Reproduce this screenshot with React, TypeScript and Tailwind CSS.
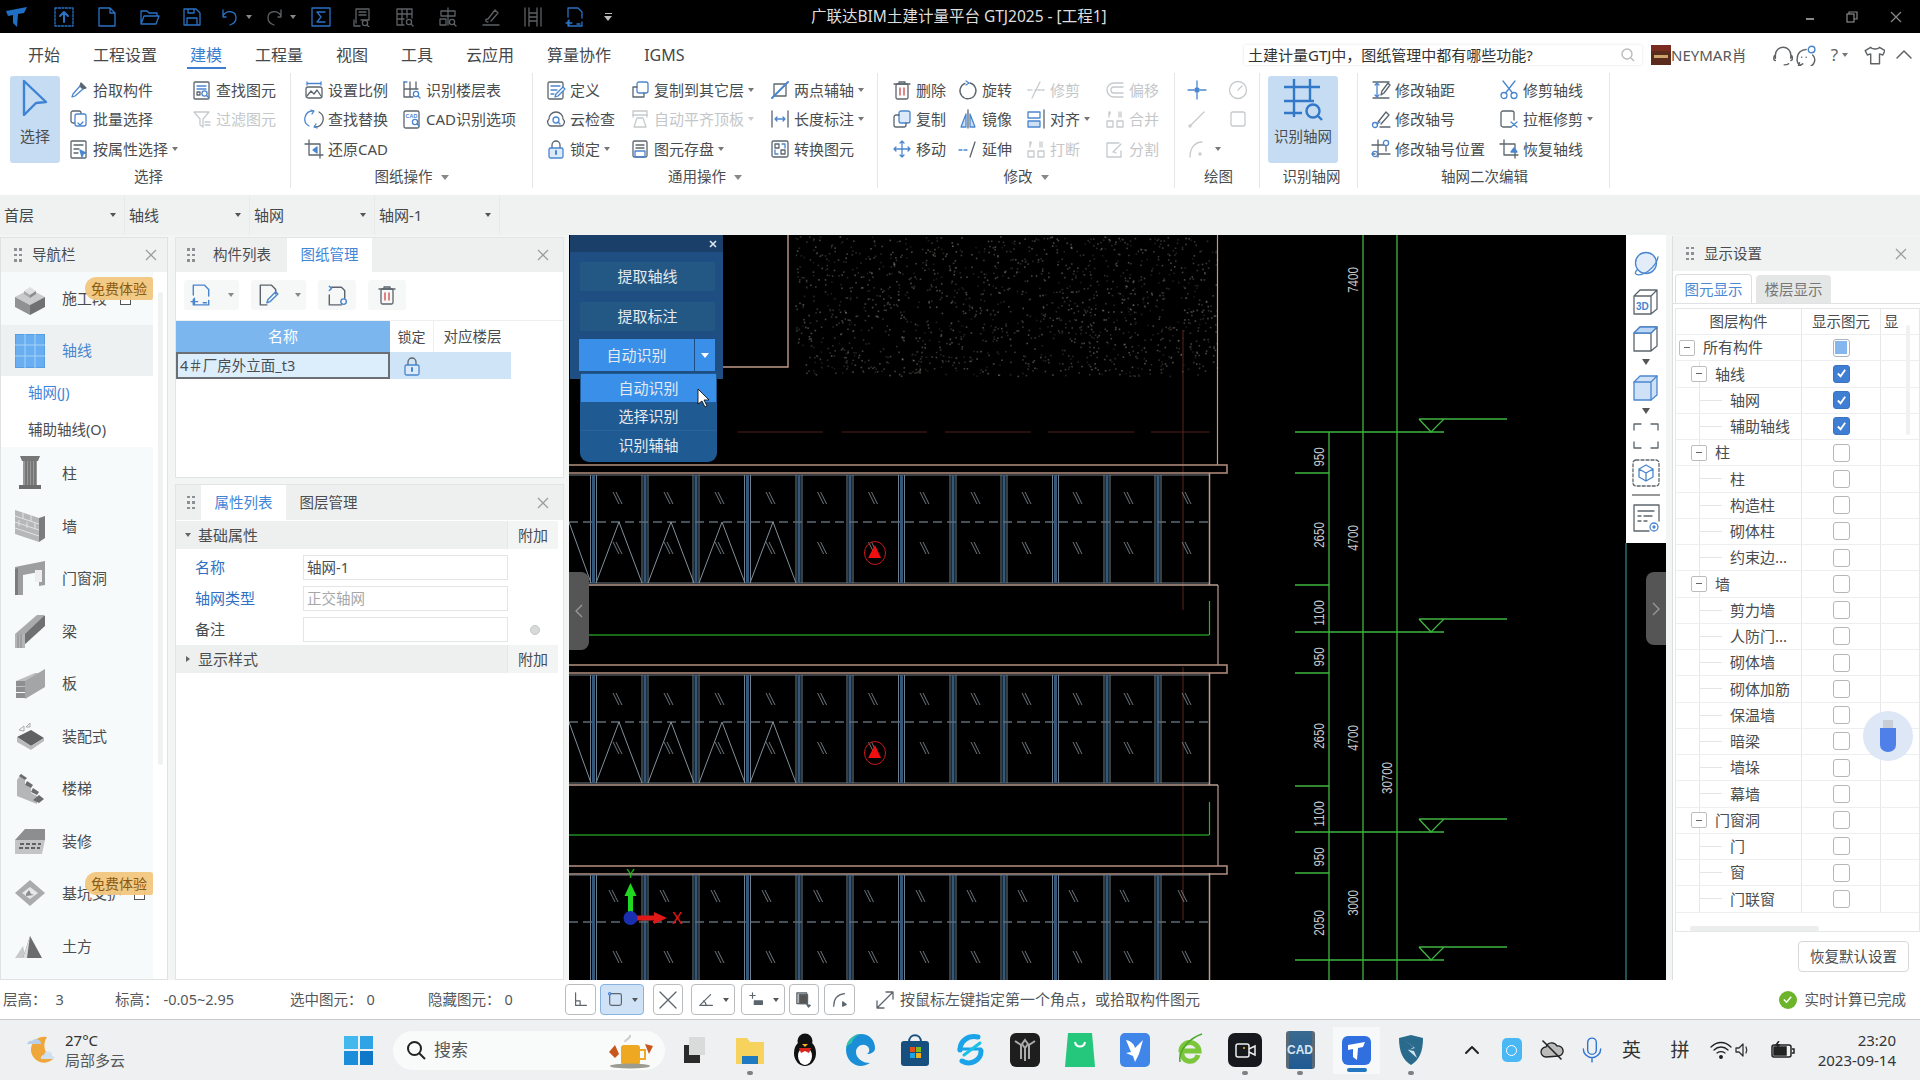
import React from "react";

const B = "#4a86cf";
const G = "#5c656d";
const L = "#c6cacd";

const Sv = ({ s = 20, c = B, w = 1.3, vb = 20, children }: any) => (
  <svg width={s} height={s} viewBox={`0 0 ${vb} ${vb}`} fill="none" stroke={c} strokeWidth={w} strokeLinecap="round" strokeLinejoin="round" className="shrink-0">
    {children}
  </svg>
);
const Q = ({ x = 13, y = 13, c = B }: any) => (
  <g stroke={c}><circle cx={x} cy={y} r="2.6" /><path d={`M${x + 2} ${y + 2}l2 2`} /></g>
);

const ic: Record<string, React.ReactNode> = {
  pick: <Sv c={G}><path d="M12 3l5 5-3 1-3-3z" fill={G} /><path d="M11 6l-7 8-1 3 3-1 8-7" stroke={B} /></Sv>,
  batch: <Sv><rect x="2" y="2" width="10" height="12" rx="2" stroke={G} /><rect x="6" y="5" width="11" height="12" rx="2" fill="#fff" /><path d="M9 14l2 2 3-3" stroke={B} /></Sv>,
  attr: <Sv c={G}><rect x="2" y="2" width="15" height="17" rx="1" /><path d="M5 6h9M5 10h5M5 14h4" /><path d="M11 11l6 3-3 1-1 3z" fill={B} stroke={B} /></Sv>,
  find: <Sv c={G}><rect x="2" y="2" width="15" height="17" rx="1" /><path d="M5 6h9M5 9h9" stroke={B} /><rect x="5" y="12" width="3" height="3" /><Q x={12.5} y={13.5} c={B} /></Sv>,
  filter: <Sv c={L}><path d="M2 3h15l-6 7v8l-3-2v-6z" /><path d="M13 13h5M13 16h5" /></Sv>,
  scale: <Sv c={G}><path d="M3 2v3M17 2v3M3 3.5h14" stroke={B} /><rect x="2" y="7" width="16" height="11" rx="2" /><path d="M3 16l4-5 3 3 3-4 4 6" /></Sv>,
  floor: <Sv c={G}><path d="M2 2v7h14M2 9v8h9M8 2v15M14 2v7" /><path d="M2 2h3" stroke={B} /><Q x={14} y={14} /></Sv>,
  findrep: <Sv c={G}><path d="M9 2A8 8 0 0 0 5 17" stroke={B} /><path d="M11 18a8 8 0 0 0 4-15" /><path d="M7 1l3 1-2 3M13 19l-3-1 2-3" stroke={B} /></Sv>,
  cad: <Sv c={G}><rect x="2" y="2" width="15" height="17" rx="1.5" /><text x="3.5" y="9" fontSize="5.5" stroke="none" fill={B} fontFamily="Liberation Sans" fontWeight="700">CAD</text><Q x={13} y={13} /></Sv>,
  crop: <Sv c={G}><path d="M5 1v15h14M1 5h15v14" /><path d="M13 8l-4 3 4 3z" fill={B} stroke={B} /></Sv>,
  define: <Sv c={G}><rect x="2" y="2" width="15" height="17" rx="1.5" /><path d="M5 6h9M5 10h6M5 14h3" stroke={B} /><path d="M9 17l1-3 7-7 2 2-7 7z" fill="#fff" stroke={B} /></Sv>,
  cloud: <Sv c={G}><path d="M5 17a4 4 0 0 1-2-7 7 7 0 0 1 14 0 4 4 0 0 1-2 7z" /><circle cx="10" cy="11" r="3" stroke={B} /><path d="M12 13l2 2" stroke={B} /></Sv>,
  lock: <Sv c={G}><path d="M6 9V6a4 4 0 0 1 8 0v3" /><rect x="3" y="9" width="14" height="10" rx="1.5" fill="#dbe9f8" stroke={B} /><path d="M10 12v3" stroke={B} strokeWidth="2" /></Sv>,
  copyfl: <Sv c={B}><rect x="7" y="2" width="11" height="11" rx="2" /><path d="M7 7H3v10h11v-4" stroke={G} /></Sv>,
  auto: <Sv c={L}><rect x="3" y="2" width="14" height="4" /><path d="M7 9l-3 9h12l-3-9zM3 6v2M17 6v2" /></Sv>,
  save: <Sv c={G}><rect x="3" y="2" width="14" height="16" rx="1.5" /><path d="M6 6h8M6 9h8" /><rect x="5" y="12" width="10" height="6" stroke={B} /></Sv>,
  twop: <Sv c={G}><rect x="4" y="4" width="12" height="12" /><path d="M2 18L18 2" stroke={B} strokeWidth="2" /></Sv>,
  len: <Sv c={G}><path d="M2 2v16M18 2v16" /><path d="M5 10h10M5 10l2-2M5 10l2 2M15 10l-2-2M15 10l-2 2" stroke={B} /></Sv>,
  conv: <Sv c={G}><rect x="2" y="2" width="16" height="16" rx="1.5" /><path d="M5 5h4v4H5zM11 11h4v4h-4z" /><path d="M15 9V5h-3M5 11v4h3" stroke={B} /></Sv>,
  del: <Sv c={G}><path d="M7 4V2h6v2M2 4h16" /><rect x="4" y="4" width="12" height="15" rx="1.5" /><path d="M8 8v7M12 8v7" stroke="#d04545" /></Sv>,
  rotate: <Sv c={G}><path d="M12 3a8 8 0 1 1-5 .3" /><path d="M8 1l3 2-3 2" stroke={B} /></Sv>,
  trim: <Sv c={L}><path d="M6 18L14 2" /><path d="M2 10h4M9 10h9" strokeDasharray="2 1.5" /></Sv>,
  offset: <Sv c={L}><path d="M18 3H9a7 7 0 0 0 0 14h9M18 7H9a3 3 0 0 0 0 6h9" /></Sv>,
  copy: <Sv c={B}><rect x="7" y="2" width="11" height="12" rx="2" fill="#dbe9f8" /><path d="M7 6H4a2 2 0 0 0-2 2v8a2 2 0 0 0 2 2h8a2 2 0 0 0 2-2v-2" stroke={G} /></Sv>,
  mirror: <Sv c={G}><path d="M10 1v18" /><path d="M8 5L3 18h5z" stroke={B} fill="#cfe0f5" /><path d="M12 5l5 13h-5z" stroke={B} fill="#cfe0f5" /></Sv>,
  align: <Sv c={B}><rect x="2" y="3" width="12" height="6" /><rect x="2" y="12" width="12" height="6" fill="#cfe0f5" /><path d="M18 1v18" stroke={G} /></Sv>,
  merge: <Sv c={L}><rect x="2" y="12" width="6" height="6" /><rect x="12" y="12" width="6" height="6" /><path d="M4 3v5M5 3v2M14 3v5M16 3v5" /></Sv>,
  move: <Sv c={B}><path d="M10 2v16M2 10h16M10 2L8 4M10 2l2 2M10 18l-2-2M10 18l2-2M2 10l2-2M2 10l2 2M18 10l-2-2M18 10l-2 2" /></Sv>,
  extend: <Sv c={G}><path d="M1 11h3M6 11h3" stroke={B} /><path d="M12 18l5-15" /></Sv>,
  split: <Sv c={L}><path d="M14 4H2v14h14v-6" /><path d="M8 13l8-8M11 14l-2-1" /></Sv>,
  dot: <Sv c={B}><path d="M10 1v6M10 13v6M1 10h6M13 10h6" /><circle cx="10" cy="10" r="2" fill={B} /></Sv>,
  gauge: <Sv c={L}><circle cx="10" cy="10" r="8.5" /><path d="M10 10l4-4" /></Sv>,
  line: <Sv c={L}><path d="M3 17L17 3" /><circle cx="3" cy="17" r="1" /></Sv>,
  sq: <Sv c={L}><rect x="3" y="3" width="14" height="14" rx="2" /></Sv>,
  arc: <Sv c={L}><path d="M3 18C3 9 8 3 15 3" /><circle cx="13" cy="15" r="1" fill={L} /></Sv>,
  modd: <Sv c={G}><path d="M2 2h16M2 18h16" /><path d="M6 3v14M6 3L4 5M6 3l2 2M6 17l-2-2M6 17l2-2" stroke={B} /><path d="M10 15l1-4 6-8 2 2-6 8z" /></Sv>,
  modn: <Sv c={G}><path d="M7 13L15 3l3 3-8 9" /><path d="M9 18h10" /><circle cx="4" cy="16" r="2.5" stroke={B} /><path d="M6 15l3-2" stroke={B} /></Sv>,
  modp: <Sv c={G}><path d="M1 6h12M7 1v17M1 15h3M8 15h11" /><circle cx="15" cy="4" r="2.6" stroke={B} /><path d="M15 7v5" /><circle cx="4" cy="15" r="2.6" stroke={B} /></Sv>,
  sciss: <Sv c={B}><circle cx="5" cy="15.5" r="3" /><circle cx="15" cy="15.5" r="3" /><path d="M6.5 13L16 1M13.5 13L4 1" /></Sv>,
  boxx: <Sv c={G}><path d="M12 18H4a2 2 0 0 1-2-2V4a2 2 0 0 1 2-2h9a2 2 0 0 1 2 2v7" /><path d="M12 13l6 5M18 13l-6 5" stroke={B} /></Sv>,
  rest: <Sv c={G}><path d="M5 1v15h14M1 5h15v14" /><path d="M12 13l3-4 3 4z" fill={B} stroke={B} /></Sv>,
};

const Caret = ({ c = "#666" }: any) => <span className="w-0 h-0 border-l-[3px] border-r-[3px] border-t-[4px] border-l-transparent border-r-transparent ml-1 shrink-0" style={{ borderTopColor: c }} />;

const Item = ({ i, t, dis, drop }: any) => (
  <div className={`flex items-center h-[29.5px] whitespace-nowrap text-[15px] ${dis ? "text-[#c4c7c9]" : "text-[#4a4d50]"}`}>
    <span className="mr-[4px] w-[20px] flex justify-center">{ic[i]}</span>
    {t && <span>{t}</span>}
    {drop && <Caret c={dis ? "#ccc" : "#777"} />}
  </div>
);

const Col = ({ w, items }: any) => (
  <div className="flex flex-col" style={{ width: w }}>
    {items.map((x: any, k: number) => x ? <Item key={k} {...x} /> : <div key={k} className="h-[29.5px]" />)}
  </div>
);

const Group = ({ w, label, arrow, pl, dx = 0, children }: any) => (
  <div className="flex flex-col h-full border-r border-[#e4e6e8] shrink-0" style={{ width: w, paddingLeft: pl }}>
    <div className="flex h-[98px] pt-[2px]">{children}</div>
    <div className="flex-1 flex items-center justify-center text-[14.5px] text-[#4a4d50]" style={{ marginLeft: -pl + dx }}>
      {label}{arrow && <span className="w-0 h-0 border-l-[4px] border-r-[4px] border-t-[5px] border-l-transparent border-r-transparent border-t-[#888] ml-2" />}
    </div>
  </div>
);

const Grip = () => (
  <span className="grid grid-cols-2 gap-x-[3px] gap-y-[3px] w-[7px] shrink-0">
    {[0, 1, 2, 3, 4, 5].map((i) => <span key={i} className="w-[2.5px] h-[2.5px] bg-[#8c9094]" />)}
  </span>
);
const Cross = ({ c = "#9a9da0" }: any) => (
  <svg width="12" height="12" viewBox="0 0 12 12" stroke={c} strokeWidth="1.3"><path d="M1 1l10 10M11 1L1 11" /></svg>
);

const Nav: Record<string, React.ReactNode> = {
  sg: <svg width="32" height="32" viewBox="0 0 32 32"><path d="M1 14l15-8 15 8-15 8z" fill="#c9cbcc" /><path d="M1 14v10l15 8V22z" fill="#8f9192" /><path d="M31 14v10l-15 8V22z" fill="#6f7172" /><path d="M10 8l6-4 6 4-6 4z" fill="#dfe0e0" /><path d="M10 8v3l6 4v-3z" fill="#a6a8a9" /><path d="M22 8v3l-6 4v-3z" fill="#8a8c8d" /></svg>,
  zx: <svg width="30" height="34" viewBox="0 0 30 34"><rect width="30" height="34" fill="#68aef0" stroke="#4a8fd8" /><path d="M10 0v34M20 0v34M0 11h30M0 22h30" stroke="#a9d2f7" /></svg>,
  zhu: <svg width="24" height="34" viewBox="0 0 24 34"><path d="M2 0h20l-2 5H4z" fill="#777" /><rect x="5" y="5" width="14" height="24" fill="#999" /><path d="M8 5v24M11 5v24M14 5v24M17 5v24" stroke="#555" /><rect x="1" y="29" width="22" height="4" fill="#6d6d6d" /></svg>,
  qiang: <svg width="30" height="32" viewBox="0 0 30 32"><path d="M0 0l24 8v24L0 24z" fill="#b5b7b8" /><path d="M24 8l6-2v22l-6 4z" fill="#7a7c7d" /><path d="M0 6l24 8M0 12l24 8M0 18l24 8M8 3v6M16 5v6M4 10v6M12 12v6M20 13v6" stroke="#e2e3e3" /></svg>,
  men: <svg width="30" height="34" viewBox="0 0 30 34"><path d="M0 6l30-6v24l-6 1V11L8 14v20H0z" fill="#9c9e9f" /><path d="M20 9h7v12h-7z" fill="#eee" /><path d="M0 8v26h3V7z" fill="#797b7c" /></svg>,
  liang: <svg width="30" height="34" viewBox="0 0 30 34"><path d="M0 22L24 2h6v10L8 32H0z" fill="#6e7071" /><path d="M0 20h10v14H0z" fill="#b3b5b6" /><path d="M3 20v14M6 20v14" stroke="#888" /><path d="M0 20L22 1h8L10 20z" fill="#a9abac" /></svg>,
  ban: <svg width="30" height="32" viewBox="0 0 30 32"><path d="M1 14L20 6h9v6L10 22H1z" fill="#bcbebf" /><path d="M1 14h9v5H1zM1 20h9v5H1zM1 26h9v5H1z" fill="#8d8f90" /><path d="M10 14L30 2v6L10 20zM10 20L30 8v6L10 26zM10 26l20-12v6L10 32z" fill="#a3a5a6" /></svg>,
  zp: <svg width="30" height="30" viewBox="0 0 30 30"><path d="M2 16L16 9l13 8-13 8z" fill="#5f6162" /><path d="M2 16v5l14 8 13-9v-3l-13 8z" fill="#b8babb" /><path d="M4 9l5-4v5zM11 6l4-4v4z" fill="none" stroke="#aaa" /></svg>,
  lt: <svg width="30" height="32" viewBox="0 0 30 32"><path d="M2 8v16l20 8V24l-6-3v-5l-6-3V8L6 2z" fill="#b4b6b7" /><path d="M6 2l6 4-2 2-6-4zM12 9l6 4-2 3-6-3zM18 16l6 4-2 3-6-3zM24 23l5 4-5 4-6-3z" fill="#6a6c6d" /></svg>,
  zx2: <svg width="30" height="30" viewBox="0 0 30 30"><path d="M0 14L10 3h20v11z" fill="#8c8e8f" /><path d="M0 14h30l-3 14H0z" fill="#c2c4c5" /><path d="M5 18h4M11 18h4M17 18h4M23 18h3M4 22h4M10 22h4M16 22h4M22 22h3" stroke="#5f6162" strokeWidth="2" /></svg>,
  jk: <svg width="32" height="28" viewBox="0 0 32 28"><path d="M1 14L16 1l15 13-15 13z" fill="#a9abac" /><path d="M8 14l8-6 8 6-8 6z" fill="#e6e7e7" /><path d="M12 15l3-4 2 4 3 1-8 1z" fill="#8a8c8d" /></svg>,
  tf: <svg width="30" height="24" viewBox="0 0 30 24"><path d="M0 24L8 12l3 12z" fill="#c7c9ca" /><path d="M8 24l7-22 12 22z" fill="#6a6c6d" /><path d="M15 2L8 24h4z" fill="#ddd" /></svg>,
};

const NavRow = ({ i, t, h = 52.5, active, badge, top = 6 }: any) => (
  <div className={`relative flex items-center pl-[13px] ${active ? "bg-[#eef1f2]" : ""}`} style={{ height: h }}>
    <span className="w-[32px] flex justify-center shrink-0">{Nav[i]}</span>
    <span className={`ml-[16px] text-[15px] whitespace-nowrap ${active ? "text-[#4a86cf]" : "text-[#4a4d50]"}`}>{t}</span>
    {badge && (
      <>
        <span className="absolute top-[22px] w-[11px] h-[11px] border border-[#555] bg-white" style={{ left: badge }} />
        <span className="absolute right-0 w-[68px] h-[23px] rounded-l-[12px] rounded-r-[3px] bg-[#f1c77e]/95 text-[#8b5a12] text-[14px] flex items-center justify-center whitespace-nowrap" style={{ top }}>免费体验</span>
      </>
    )}
  </div>
);

const Tool = ({ w, children, drop }: any) => (
  <div className="h-[30px] rounded-[3px] bg-[#f6f7f7] flex items-center justify-center gap-3" style={{ width: w }}>
    {children}
    {drop && <Caret c="#888" />}
  </div>
);

const Bar = ({ t, tri }: any) => (
  <div className="h-[28px] flex bg-[#eeefef] items-center text-[15px] text-[#4a4d50] mr-[5px] relative">
    <span className="w-[19px] flex justify-center pl-[4px]">
      {tri === "d" ? <span className="w-0 h-0 border-l-[3px] border-r-[3px] border-t-[4px] border-l-transparent border-r-transparent border-t-[#666]" /> : <span className="w-0 h-0 border-t-[3px] border-b-[3px] border-l-[4px] border-t-transparent border-b-transparent border-l-[#666]" />}
    </span>
    <span className="ml-[3px]">{t}</span>
    <span className="ml-auto w-[51px] h-full flex items-center justify-center bg-[#f3f4f4] border-l border-[#e6e7e7]">附加</span>
  </div>
);

const Field = ({ l, v, blue, muted, circle }: any) => (
  <div className="flex items-center h-[31px]">
    <span className={`w-[127px] pl-[19px] text-[15px] ${blue ? "text-[#2f70c2]" : "text-[#4a4d50]"}`}>{l}</span>
    <div className={`w-[205px] h-[25px] border border-[#e3e5e6] bg-white pl-[3px] flex items-center text-[14.5px] ${muted ? "text-[#a5a8aa]" : "text-[#4a4d50]"}`}>{v}</div>
    {circle && <span className="ml-[22px] w-[10px] h-[10px] rounded-full bg-[#d8dada] border border-[#c4c6c7]" />}
  </div>
);

const rows = [
  [0, "所有构件", "half"], [1, "轴线", "on"], [2, "轴网", "on"], [2, "辅助轴线", "on"], [1, "柱", ""], [2, "柱", ""], [2, "构造柱", ""], [2, "砌体柱", ""], [2, "约束边...", ""], [1, "墙", ""], [2, "剪力墙", ""], [2, "人防门...", ""], [2, "砌体墙", ""], [2, "砌体加筋", ""], [2, "保温墙", ""], [2, "暗梁", ""], [2, "墙垛", ""], [2, "幕墙", ""], [1, "门窗洞", ""], [2, "门", ""], [2, "窗", ""], [2, "门联窗", ""],
] as [number, string, string][];

const Exp = () => (
  <span className="w-[16px] h-[16px] border border-[#bbbdbf] rounded-[2px] bg-white flex items-center justify-center shrink-0 relative"><span className="w-[6px] h-px bg-[#666]" /></span>
);

const Check = ({ s }: any) => (
  s === "on" ? (
    <span className="w-[17px] h-[18px] rounded-[3px] bg-[#3f7fd3] border border-[#3a74c0] flex items-center justify-center">
      <svg width="11" height="11" viewBox="0 0 12 12" fill="none" stroke="#fff" strokeWidth="2"><path d="M2 6l3 3 5-7" /></svg>
    </span>
  ) : s === "half" ? (
    <span className="w-[17px] h-[18px] rounded-[3px] border border-[#a9b4c0] bg-white flex items-center justify-center"><span className="w-[12px] h-[13px] bg-[#86b6ee]" /></span>
  ) : (
    <span className="w-[17px] h-[18px] rounded-[3px] border border-[#b4b6b8] bg-white" />
  )
);

const Tr = ({ r, idx }: any) => {
  const [lv, t, s] = r;
  return (
    <div className="grid grid-cols-[126px_79px_20px] h-[26.25px] border-b border-[#eceeef] items-stretch relative">
      {idx > 0 && <span className="absolute left-[23px] top-0 bottom-0 w-px bg-[#e6e7e8]" />}
      <div className="flex items-center text-[15px] text-[#4a4d50] border-r border-[#e6e7e8] whitespace-nowrap" style={{ paddingLeft: lv === 0 ? 3 : lv === 1 ? 15 : 23 }}>
        {lv < 2 ? <Exp /> : <span className="w-[23px] h-px bg-[#e4e5e6] mr-[8px]" />}
        <span className={lv < 2 ? "ml-[8px]" : ""}>{t}</span>
      </div>
      <div className="flex items-center justify-center border-r border-[#e6e7e8]"><Check s={s} /></div>
      <div />
    </div>
  );
};

const mullions = [593.5, 645, 696, 747.5, 799, 850, 901.5, 953, 1004, 1055.5, 1107, 1158];
const hatch = [617, 668, 719, 770, 821.6, 872.5, 924, 975, 1026, 1077, 1128, 1186];
const Hatch = ({ x, y }: any) => (
  <path d={`M${x - 4} ${y - 6}l6 12M${x - 1} ${y - 6}l6 12`} stroke="#8a969e" strokeWidth="0.8" />
);
const Band = ({ top, bot, dash, h1, h2, tri, dx = 0 }: any) => (
  <g>
    <path d={`M569 ${top + 2}H1209M569 ${Math.min(bot - 2, 985)}H1209`} stroke="#6e7a82" />
    {mullions.map((x) => (
      <g key={x}>
        <path d={`M${x - 3} ${top + 2}V${bot - 2}M${x + 3} ${top + 2}V${bot - 2}`} stroke="#6f7e89" />
        <path d={`M${x} ${top + 2}V${bot - 2}`} stroke="#33587c" strokeWidth="3" />
      </g>
    ))}
    <path d={`M${1209.5} ${top}V${bot}`} stroke="#b99a8c" strokeWidth="1.5" />
    <path d={`M569 ${dash}H1209`} stroke="#5c6b76" strokeWidth="1.3" strokeDasharray="9 5" />
    {hatch.map((x, i) => <g key={i}><Hatch x={x + dx} y={h1} /><Hatch x={x} y={h2} /></g>)}
    {tri && [619, 671, 722, 773].map((x) => <path key={x} d={`M${x - 23} ${bot - 2}L${x} ${dash}L${x + 23} ${bot - 2}`} stroke="#82909a" fill="none" />)}
    {tri && <path d={`M569 ${dash}L591 ${bot - 2}`} stroke="#82909a" />}
  </g>
);
const Slab = ({ y }: any) => <rect x="560" y={y} width="667" height="8" fill="none" stroke="#ab8878" strokeWidth="1.6" />;
const RedMark = ({ y }: any) => (
  <g>
    <ellipse cx="875" cy={y} rx="10.5" ry="11.5" fill="none" stroke="#d01818" strokeWidth="1" />
    <path d={`M875 ${y - 8}l6 13h-13z`} fill="#ee1010" />
  </g>
);
const Level = ({ y }: any) => (
  <path d={`M1419 ${y - 13}L1431 ${y}L1444 ${y - 13}H1419M1444 ${y - 13}H1507`} stroke="#3fb53f" strokeWidth="1.3" fill="none" />
);
const dims: [string, number, number][] = [["7400", 1353, 280], ["950", 1319, 457], ["2650", 1319, 535], ["4700", 1353, 538], ["1100", 1319, 613], ["950", 1319, 657], ["2650", 1319, 736], ["4700", 1353, 738], ["30700", 1387, 778], ["1100", 1319, 814], ["950", 1319, 857], ["3000", 1353, 903], ["2050", 1319, 923]];

const dots = (() => {
  const a: [number, number, number][] = [];
  let s = 12345;
  const r = () => (s = (s * 1103515245 + 12345) & 0x7fffffff) / 0x7fffffff;
  for (let i = 0; i < 1500; i++) a.push([795 + r() * 422, 236 + r() * 140, 0.15 + r() * 0.35]);
  return a;
})();

const Canvas = () => (
  <svg width="1097" height="745" viewBox="569 235 1097 745" className="block">
    <rect x="569" y="235" width="1097" height="745" fill="#000" />
    {dots.map((d, i) => <rect key={i} x={d[0]} y={d[1]} width="1.6" height="1.6" fill="#9a9a90" opacity={d[2]} />)}
    <path d="M788 235V367H720" stroke="#c09a8a" strokeWidth="1.4" fill="none" />
    <path d="M1217.5 235V465M1218 585V665M1218 785V866" stroke="#b99a8c" strokeWidth="1.2" fill="none" />
    <path d="M738 432H823M842 432H927M945 432H1031M1048 432H1134M1151 432H1210" stroke="#4f2018" strokeWidth="1.2" />
    <path d="M1183 330V610M1183 667V920" stroke="#5a241c" strokeWidth="1" />
    <Slab y={465} /><Slab y={665} /><Slab y={866} />
    <Band top={473} bot={585} dash={522} h1={498} h2={548} tri />
    <Band top={673} bot={785} dash={722} h1={699} h2={748} tri />
    <Band top={873} bot={990} dash={922} h1={896} h2={957} dx={-4} />
    <path d="M569 585H1218M569 785H1218" stroke="#b99a8c" strokeWidth="1.4" />
    <path d="M569 635H1209M569 835H1209" stroke="#1f8a1f" strokeWidth="1.6" fill="none" />
    <path d="M1209.5 635V601M1209.5 835V802" stroke="#2fb02f" strokeWidth="1.2" fill="none" />
    <RedMark y={553} /><RedMark y={753} />
    <path d="M1363 235V980M1397 235V980M1329 432V980" stroke="#3fb53f" strokeWidth="1.3" />
    <path d="M1626 543V980" stroke="#3aa6a6" strokeWidth="1" />
    <path d="M1295 432H1444M1295 473H1329M1295 585H1329M1295 632H1444M1295 673H1329M1295 786H1329M1295 832H1444M1295 873H1329M1295 960H1444" stroke="#3fb53f" strokeWidth="1.3" />
    <Level y={432} /><Level y={632} /><Level y={832} /><Level y={960} />
    {dims.map(([t, x, y], i) => (
      <text key={i} transform={`translate(${x + 5} ${y}) rotate(-90)`} textAnchor="middle" fontSize="14" fill="#c9c9c9" fontFamily="Liberation Sans" textLength={t.length * 6.4} lengthAdjust="spacingAndGlyphs">{t}</text>
    ))}
    <path d="M630.5 912V895" stroke="#20d820" strokeWidth="5" />
    <path d="M630.5 883l6 13h-12z" fill="#20d820" />
    <text x="630.5" y="878" textAnchor="middle" fontSize="13" fill="#20c020" fontFamily="Liberation Sans">Y</text>
    <path d="M636 918H656" stroke="#e01818" strokeWidth="5" />
    <path d="M667 918l-13-6v12z" fill="#e01818" />
    <circle cx="630.5" cy="918" r="7" fill="#1a2fb0" />
    <text x="677" y="924" textAnchor="middle" fontSize="16" fill="#e01818" fontFamily="Liberation Sans">X</text>
  </svg>
);

const SideIc = ({ children }: any) => <div className="h-[37px] flex items-center justify-center">{children}</div>;

const Sq = ({ w, active, drop, children }: any) => (
  <div className={`h-[31px] rounded-[4px] border flex items-center justify-center gap-[3px] ${active ? "bg-[#cfe2f6] border-[#86b2df]" : "bg-white border-[#b9bcbe]"}`} style={{ width: w }}>
    {children}
    {drop && <Caret c="#555" />}
  </div>
);

const Slot = ({ w = 55, dot, children }: any) => (
  <div className="relative flex items-center justify-center h-full shrink-0" style={{ width: w }}>
    {children}
    {dot && <span className="absolute bottom-[5px] w-[6px] h-[4px] rounded-full bg-[#7d8184]" />}
  </div>
);

const QA = ({ w, caret, children }: any) => (
  <div className="flex items-center justify-center shrink-0" style={{ width: w }}>
    {children}
    {caret && <span className="w-0 h-0 border-l-[3px] border-r-[3px] border-t-[4px] border-l-transparent border-r-transparent border-t-[#888] ml-[6px]" />}
  </div>
);

const QB = "#2a72c4";
const QG = "#5d6164";

export default function App() {
  return (
    <div className="w-[1920px] h-[1080px] overflow-hidden flex flex-col bg-[#f3f5f5] font-['Noto_Sans','Noto_Sans_CJK_SC',sans-serif] text-[#4a4d50]">
      {/* title bar */}
      <div className="h-[33px] bg-black flex items-center shrink-0">
        <div className="w-[811px] flex items-center shrink-0">
          <span className="w-[43px] pl-[5px] shrink-0">
            <svg width="24" height="24" viewBox="0 0 24 24"><path d="M1 6L22 2l-3 6-6 1-1 13-4-4V10L3 11z" fill="#1f6fc4" /></svg>
          </span>
          <QA w={42}><Sv s={20} c={QB}><rect x="1" y="1" width="18" height="18" strokeDasharray="2 1.5" /><path d="M10 15V6M6 9l4-4 4 4" strokeWidth="2" /></Sv></QA>
          <QA w={43}><Sv s={20} c={QB}><path d="M2 1h11l5 5v13H2zM13 1v5h5" /></Sv></QA>
          <QA w={43}><Sv s={20} c={QB}><path d="M1 17V4h6l2 2h8v3M1 17l3-8h15l-3 8z" /></Sv></QA>
          <QA w={42}><Sv s={20} c={QB}><path d="M2 2h12l4 4v12H2zM6 2v4h6V2M5 18v-7h10v7" /></Sv></QA>
          <QA w={45} caret><Sv s={20} c={QB}><path d="M6 10H3V3M3 9c3-6 13-6 13 2 0 4-3 6-6 7" /></Sv></QA>
          <QA w={44} caret><Sv s={20} c={QG}><path d="M14 10h3V3M17 9C14 3 4 3 4 11c0 4 3 6 6 7" /></Sv></QA>
          <QA w={38}><Sv s={20} c={QB}><rect x="1" y="1" width="18" height="18" /><path d="M14 5H6l4 5-4 5h8" /></Sv></QA>
          <QA w={44}><Sv s={20} c={QG}><path d="M4 16V2h13v11H9M7 5h7M7 8h7" /><path d="M2 13v6h6" /><Q x={13} y={16} c={QG} /></Sv></QA>
          <QA w={42}><Sv s={20} c={QG}><path d="M2 2h15v9M2 2v16h7M7 2v16M12 2v9M2 7h15M2 12h7" /><Q x={14} y={15} c={QG} /></Sv></QA>
          <QA w={43}><Sv s={20} c={QG}><path d="M10 1v17M3 4h14v5H3zM2 12h6v6H2z" /><Q x={14} y={15} c={QG} /></Sv></QA>
          <QA w={43}><Sv s={20} c={QG}><path d="M2 18h16M7 15c-3 0-3-3 0-3l7-9 3 3-7 8" /></Sv></QA>
          <QA w={42}><Sv s={20} c={QG}><path d="M2 1v18M18 1v18M6 1v18M14 1v18M6 6h8M6 14h8M6 10l8 0" /></Sv></QA>
          <QA w={42}><Sv s={20} c={QB}><path d="M3 10V1h10l4 4v6M3 14v5h14v-4M1 16h6M4 13v6M12 17h3" /></Sv></QA>
          <QA w={24}><span className="flex flex-col items-center gap-[2px]"><span className="w-[7px] h-px bg-[#bbb]" /><span className="w-0 h-0 border-l-[4px] border-r-[4px] border-t-[5px] border-l-transparent border-r-transparent border-t-[#bbb]" /></span></QA>
        </div>
        <div className="text-[15.5px] text-[#dedede] whitespace-nowrap shrink-0">广联达BIM土建计量平台 GTJ2025 - [工程1]</div>
        <div className="flex-1 flex items-center justify-end pr-[18px] gap-[32px]">
          <span className="w-[8px] h-[2px] bg-[#888] mt-[5px]" />
          <svg width="12" height="12" viewBox="0 0 12 12" fill="none" stroke="#888" strokeWidth="1.2"><rect x="1" y="3" width="7" height="8" /><path d="M3 3V1h8v7H8" /></svg>
          <Cross c="#888" />
        </div>
      </div>

      {/* tabs */}
      <div className="h-[37px] bg-white flex items-center shrink-0 pl-[28px] pt-[7px] text-[16px] text-[#45484b]">
        <div className="flex gap-[33px] items-center">
          {["开始", "工程设置", "建模", "工程量", "视图", "工具", "云应用", "算量协作", "IGMS"].map((t) => (
            <span key={t} className={`relative whitespace-nowrap ${t === "建模" ? "text-[#3a7fd0]" : ""}`}>
              {t}
              {t === "建模" && <span className="absolute -left-[3px] -right-[4px] -bottom-[2px] h-[2px] bg-[#3a7fd0]" />}
            </span>
          ))}
        </div>
        <div className="ml-auto flex items-center">
          <div className="w-[398px] h-[20px] bg-white shadow-[0_0_3px_rgba(0,0,0,0.12)] rounded-[2px] flex items-center pl-[4px] pr-[7px] text-[15px] text-[#333]">
            <span className="whitespace-nowrap">土建计量GTJ中，图纸管理中都有哪些功能?</span>
            <svg className="ml-auto" width="14" height="14" viewBox="0 0 14 14" fill="none" stroke="#bbb" strokeWidth="1.4"><circle cx="6" cy="6" r="5" /><path d="M10 10l3 3" /></svg>
          </div>
          <span className="w-[20px] h-[20px] ml-[9px] bg-[#5a2a1c] border-t-[6px] border-[#7a2c20] relative"><span className="absolute left-[3px] top-[4px] w-[14px] h-[3px] bg-[#c9a56a]" /></span>
          <span className="w-[100px] text-[15px] text-[#55585b] whitespace-nowrap">NEYMAR肖</span>
          <div className="flex items-center w-[149px]">
            <span className="w-[22px] flex justify-center"><Sv s={22} c="#5f6366"><path d="M4 13V10a7 7 0 0 1 14 0v3M4 10c-2 1-2 5 0 5M18 10c2 1 2 5 0 5M16 18c-1 1-2 1-4 1" /></Sv></span>
            <span className="w-[23px] flex justify-center"><Sv s={22} c="#5f6366"><path d="M17 10a8 7 0 1 1-14 3c0-5 4-8 8-8M5 17l-1 3 4-2" /><circle cx="16" cy="5" r="3" stroke={B} /><path d="M7 12h.1M11 12h.1" /></Sv></span>
            <span className="w-[47px] flex items-center justify-center"><span className="text-[17px] text-[#5f6366]">?</span><Caret c="#777" /></span>
            <span className="w-[22px] flex justify-center"><Sv s={22} c="#5f6366"><path d="M7 3L2 6l2 4 3-1v9h8V9l3 1 2-4-5-3c-1 2-7 2-8 0z" /></Sv></span>
            <span className="w-[20px] ml-[9px] flex justify-center"><Sv s={20} c="#5f6366" w={1.5}><path d="M3 13l7-7 7 7" /></Sv></span>
          </div>
        </div>
      </div>

      {/* ribbon */}
      <div className="h-[125px] bg-white flex shrink-0 pb-[7px] pt-[3px] relative">
        <Group w={291} pl={10} dx={7} label="选择">
          <div className="w-[50px] h-[87px] mt-[1px] rounded-[3px] bg-[#c6dcf2] flex flex-col items-center pt-[3px] shrink-0">
            <svg width="28" height="37" viewBox="0 0 28 37" fill="none"><path d="M3 2l22 21-10 1-12 12z" stroke="#3d83d6" strokeWidth="2.4" strokeLinejoin="round" /></svg>
            <span className="text-[15px] mt-[9px] text-[#4a4d50]">选择</span>
          </div>
          <div className="ml-[9px]"><Col w={123} items={[{ i: "pick", t: "拾取构件" }, { i: "batch", t: "批量选择" }, { i: "attr", t: "按属性选择", drop: 1 }]} /></div>
          <Col w={99} items={[{ i: "find", t: "查找图元" }, { i: "filter", t: "过滤图元", dis: 1 }]} />
        </Group>
        <Group w={242} pl={13} label="图纸操作" arrow>
          <Col w={98} items={[{ i: "scale", t: "设置比例" }, { i: "findrep", t: "查找替换" }, { i: "crop", t: "还原CAD" }]} />
          <Col w={125} items={[{ i: "floor", t: "识别楼层表" }, { i: "cad", t: "CAD识别选项" }]} />
        </Group>
        <Group w={345} pl={13} label="通用操作" arrow>
          <Col w={84} items={[{ i: "define", t: "定义" }, { i: "cloud", t: "云检查" }, { i: "lock", t: "锁定", drop: 1 }]} />
          <Col w={140} items={[{ i: "copyfl", t: "复制到其它层", drop: 1 }, { i: "auto", t: "自动平齐顶板", drop: 1, dis: 1 }, { i: "save", t: "图元存盘", drop: 1 }]} />
          <Col w={105} items={[{ i: "twop", t: "两点辅轴", drop: 1 }, { i: "len", t: "长度标注", drop: 1 }, { i: "conv", t: "转换图元" }]} />
        </Group>
        <Group w={297} pl={14} label="修改" arrow>
          <Col w={66} items={[{ i: "del", t: "删除" }, { i: "copy", t: "复制" }, { i: "move", t: "移动" }]} />
          <Col w={68} items={[{ i: "rotate", t: "旋转" }, { i: "mirror", t: "镜像" }, { i: "extend", t: "延伸" }]} />
          <Col w={79} items={[{ i: "trim", t: "修剪", dis: 1 }, { i: "align", t: "对齐", drop: 1 }, { i: "merge", t: "打断", dis: 1 }]} />
          <Col w={68} items={[{ i: "offset", t: "偏移", dis: 1 }, { i: "merge", t: "合并", dis: 1 }, { i: "split", t: "分割", dis: 1 }]} />
        </Group>
        <Group w={85} pl={12} dx={3} label="绘图">
          <Col w={41} items={[{ i: "dot" }, { i: "line" }, { i: "arc", drop: 1 }]} />
          <Col w={30} items={[{ i: "gauge" }, { i: "sq" }]} />
        </Group>
        <Group w={98} pl={8} dx={6} label="识别轴网">
          <div className="w-[70px] h-[87px] mt-[1px] rounded-[3px] bg-[#c6dcf2] flex flex-col items-center pt-[1px]">
            <svg width="42" height="46" viewBox="0 0 42 46" fill="none" stroke="#3178c8" strokeWidth="2.4"><path d="M12 2v38M28 2v22M2 10h36M2 24h30M2 36h18" /><circle cx="31" cy="34" r="6.5" /><path d="M36 39l4 4" /></svg>
            <span className="text-[14.5px] mt-[3px] whitespace-nowrap text-[#4a4d50]">识别轴网</span>
          </div>
        </Group>
        <Group w={252} pl={13} dx={2} label="轴网二次编辑">
          <Col w={128} items={[{ i: "modd", t: "修改轴距" }, { i: "modn", t: "修改轴号" }, { i: "modp", t: "修改轴号位置" }]} />
          <Col w={105} items={[{ i: "sciss", t: "修剪轴线" }, { i: "boxx", t: "拉框修剪", drop: 1 }, { i: "rest", t: "恢复轴线" }]} />
        </Group>
      </div>

      {/* selector bar */}
      <div className="h-[40px] bg-[#f0f2f2] flex shrink-0 items-center">
        {["首层", "轴线", "轴网", "轴网-1"].map((t) => (
          <div key={t} className="w-[125px] h-full flex items-center pl-[4px] pr-[8px] border-r border-[#e8eaea] text-[15px] text-[#45484b]">
            <span>{t}</span>
            <span className="ml-auto w-0 h-0 border-l-[3px] border-r-[3px] border-t-[4px] border-l-transparent border-r-transparent border-t-[#555]" />
          </div>
        ))}
      </div>

      {/* main */}
      <div className="h-[745px] flex shrink-0">
        {/* nav */}
        <div className="w-[168px] mt-[2px] border border-[#dfe1e2] bg-white flex flex-col shrink-0">
          <div className="h-[34px] bg-[#f0f2f2] flex items-center pl-[13px] pr-[10px] text-[14.5px] shrink-0">
            <Grip /><span className="ml-[11px]">导航栏</span><span className="ml-auto"><Cross /></span>
          </div>
          <div className="flex-1 flex min-h-0">
            <div className="w-[152px] bg-[#f7fafa] flex flex-col shrink-0">
              <NavRow i="sg" t="施工段" h={53} badge={119} top={5} />
              <NavRow i="zx" t="轴线" h={51} active />
              <div className="h-[71px] bg-white flex flex-col justify-center pl-[27px] text-[14.5px] gap-[15px]">
                <span className="text-[#3f86d8]">轴网(J)</span>
                <span>辅助轴线(O)</span>
              </div>
              <NavRow i="zhu" t="柱" />
              <NavRow i="qiang" t="墙" />
              <NavRow i="men" t="门窗洞" />
              <NavRow i="liang" t="梁" />
              <NavRow i="ban" t="板" />
              <NavRow i="zp" t="装配式" />
              <NavRow i="lt" t="楼梯" />
              <NavRow i="zx2" t="装修" />
              <NavRow i="jk" t="基坑支护" badge={133} top={5} />
              <NavRow i="tf" t="土方" />
            </div>
            <div className="w-[14px] flex justify-center pt-[20px]">
              <span className="w-[5px] h-[473px] bg-[#f0f2f2] rounded-full" />
            </div>
          </div>
        </div>

        {/* middle */}
        <div className="w-[389px] ml-[7px] mt-[2px] flex flex-col shrink-0">
          <div className="h-[241px] border border-[#e2e4e5] bg-white flex flex-col">
            <div className="h-[34px] bg-[#eef0f0] flex items-center shrink-0 pl-[11px] pr-[14px] text-[14.5px]">
              <Grip />
              <span className="ml-[19px] w-[74px]">构件列表</span>
              <span className="w-[85px] h-full bg-white text-[#3f86d8] flex items-center justify-center">图纸管理</span>
              <span className="ml-auto"><Cross /></span>
            </div>
            <div className="h-[49px] flex items-center pl-[8px] pb-[3px] gap-[12px] border-b border-[#eceeef] shrink-0">
              <Tool w={55} drop><Sv s={22} c={B}><path d="M3 10V1h10l4 4v6M3 14v5h14v-4M1 16h6M4 13v6M12 17h3" /></Sv></Tool>
              <Tool w={55} drop><Sv s={22} c={G}><path d="M3 19V1h10l4 4v4M3 19h6" /><path d="M9 17l1-3 7-7 2 2-7 7z" stroke={B} /></Sv></Tool>
              <Tool w={38}><Sv s={22} c={G}><path d="M5 3h9l3 3v7M3 10v9h11" /><path d="M3 2l2 2-2 2" stroke={B} /><circle cx="16" cy="16" r="2.5" stroke={B} /></Sv></Tool>
              <Tool w={38}>{ic.del}</Tool>
            </div>
            <div className="flex h-[31px] text-[15px] shrink-0">
              <div className="w-[214px] bg-[#7cb6ef] text-white flex items-center justify-center">名称</div>
              <div className="w-[44px] flex items-center justify-center border-r border-[#eceeef] whitespace-nowrap text-[14px]">锁定</div>
              <div className="w-[77px] flex items-center justify-center whitespace-nowrap text-[14.5px]">对应楼层</div>
            </div>
            <div className="flex h-[27px] w-[335px] bg-[#cfe5f7] shrink-0">
              <div className="w-[214px] border-2 border-[#6b6f73] bg-[#dceefc] flex items-center pl-[2px] text-[14.5px] whitespace-nowrap">4＃厂房外立面_t3</div>
              <div className="w-[44px] flex items-center justify-center">{ic.lock}</div>
            </div>
          </div>
          <div className="h-[496px] mt-[6px] border border-[#e2e4e5] bg-white flex flex-col">
            <div className="h-[35px] bg-[#eef0f0] flex items-center shrink-0 pl-[11px] pr-[14px] text-[14.5px]">
              <Grip />
              <span className="ml-[7px] w-[85px] h-full bg-white text-[#3f86d8] flex items-center justify-center">属性列表</span>
              <span className="w-[85px] flex items-center justify-center">图层管理</span>
              <span className="ml-auto"><Cross /></span>
            </div>
            <div className="mt-[1px] flex flex-col">
              <Bar t="基础属性" tri="d" />
              <div className="h-[3px]" />
              <Field l="名称" v="轴网-1" blue />
              <Field l="轴网类型" v="正交轴网" blue muted />
              <Field l="备注" v="" circle />
              <Bar t="显示样式" tri="r" />
            </div>
          </div>
        </div>

        {/* canvas */}
        <div className="w-[1097px] ml-[5px] relative shrink-0 overflow-hidden">
          <Canvas />
          <div className="absolute left-0 top-[337px] w-[20px] h-[78px] bg-[#555] rounded-r-[8px] flex items-center justify-center text-[#999]">
            <svg width="8" height="14" viewBox="0 0 8 14" fill="none" stroke="#999" strokeWidth="1.3"><path d="M7 1L1 7l6 6" /></svg>
          </div>
          <div className="absolute right-0 top-[337px] w-[20px] h-[73px] bg-[#555] rounded-l-[8px] flex items-center justify-center">
            <svg width="8" height="14" viewBox="0 0 8 14" fill="none" stroke="#999" strokeWidth="1.3"><path d="M1 1l6 6-6 6" /></svg>
          </div>
          {/* side tool */}
          <div className="absolute right-0 top-0 w-[40px] h-[308px] bg-white flex flex-col items-center pt-[10px]">
            <SideIc><Sv s={30} c={B} vb={30}><circle cx="15" cy="14" r="10.5" fill="#e3edf9" /><path d="M6 21c-4 4 0 6 6 4s14-10 15-17" /></Sv></SideIc>
            <SideIc><Sv s={30} c={G} vb={30}><path d="M3 10l6-6h17v19l-6 5H3zM3 10h17v18M20 10l6-6" /><text x="5" y="24" fontSize="10" fill={B} stroke="none" fontFamily="Liberation Sans" fontWeight="700">3D</text></Sv></SideIc>
            <SideIc><Sv s={30} c={G} vb={30}><path d="M3 10l6-6h17v19l-6 5H3zM3 10h17v18M20 10l6-6" /><path d="M3 10l6-6h17l-6 6z" fill="#bcd6f5" stroke={B} /></Sv></SideIc>
            <span className="w-0 h-0 border-l-[4px] border-r-[4px] border-t-[6px] border-l-transparent border-r-transparent border-t-[#555] my-[3px]" />
            <div className="h-[37px] flex items-center"><Sv s={30} c={B} vb={30}><path d="M3 10l6-6h17v19l-6 5H3z" fill="#cfe1f7" /><path d="M3 10h17v18M20 10l6-6" /></Sv></div>
            <span className="w-0 h-0 border-l-[4px] border-r-[4px] border-t-[6px] border-l-transparent border-r-transparent border-t-[#555] my-[3px]" />
            <SideIc><Sv s={28} c={G} vb={28}><path d="M2 8V2h7M19 2h7v6M26 20v6h-7M9 26H2v-6" /></Sv></SideIc>
            <SideIc><Sv s={30} c={G} vb={30}><rect x="2" y="2" width="26" height="26" rx="3" strokeDasharray="3 2" /><path d="M15 7l7 4v8l-7 4-7-4v-8zM8 11l7 4 7-4M15 15v8" stroke={B} /></Sv></SideIc>
            <span className="w-[28px] h-[2px] bg-[#999] mt-[3px] mb-[3px]" />
            <SideIc><Sv s={30} c={G} vb={30}><path d="M18 28H3V2h25v16" /><path d="M7 8h16M7 13h3M13 13h8M7 18h3M13 18h3" /><circle cx="23" cy="24" r="4" stroke={B} /><circle cx="23" cy="24" r="1" fill={B} stroke={B} /></Sv></SideIc>
          </div>
          {/* popup */}
          <div className="absolute left-[1px] top-0 w-[153px] h-[144px] bg-[#1f4f82] flex flex-col text-[15px] text-[#e4eaf0]">
            <div className="h-[17px] bg-[#1a3f68] flex items-center justify-end pr-[6px] shrink-0">
              <svg width="8" height="8" viewBox="0 0 8 8" stroke="#dfe6ee" strokeWidth="1.6"><path d="M1 1l6 6M7 1L1 7" /></svg>
            </div>
            <div className="pl-[10px] pr-[8px] flex flex-col">
              <div className="mt-[10px] h-[29px] bg-[#235885] flex items-center justify-center">提取轴线</div>
              <div className="mt-[11px] h-[29px] bg-[#235885] flex items-center justify-center">提取标注</div>
              <div className="mt-[8px] -ml-[1px] flex h-[32px] gap-[1px]">
                <div className="w-[116px] bg-[#3a8fe8] flex items-center justify-center">自动识别</div>
                <div className="w-[20px] bg-[#3a8fe8] flex items-center justify-center"><span className="w-0 h-0 border-l-[4px] border-r-[4px] border-t-[5px] border-l-transparent border-r-transparent border-t-white" /></div>
              </div>
            </div>
          </div>
          <div className="absolute left-[11px] top-[138px] w-[137px] h-[89px] rounded-b-[9px] rounded-t-[3px] bg-[#1f5a92] flex flex-col text-[15px] text-[#e4eaf0] pt-[1px]">
            <div className="mx-[1px] h-[28px] bg-[#3a8fe8] flex items-center justify-center">自动识别</div>
            <div className="h-[29px] flex items-center justify-center border-b border-[#2a6398]">选择识别</div>
            <div className="h-[29px] flex items-center justify-center">识别辅轴</div>
          </div>
          <svg className="absolute left-[128px] top-[153px]" width="14" height="20" viewBox="0 0 14 20"><path d="M1 1v15l4-3 3 6 2-1-3-6h5z" fill="#fff" stroke="#000" strokeWidth="0.8" /></svg>
        </div>

        {/* right panel */}
        <div className="w-[248px] ml-[6px] mt-[1px] border-l border-[#dcdedf] bg-white flex flex-col shrink-0 relative">
          <div className="h-[35px] bg-[#f0f2f2] flex items-center pl-[13px] pr-[13px] text-[14.5px] shrink-0">
            <Grip /><span className="ml-[11px]">显示设置</span><span className="ml-auto"><Cross /></span>
          </div>
          <div className="h-[33px] pl-[2px] flex items-end border-b border-[#dfe1e2] shrink-0">
            <div className="w-[77px] h-[29px] pt-[2px] border border-b-0 border-[#dcdedf] rounded-t-[4px] text-[#4a8ad4] text-[14.5px] flex items-center justify-center whitespace-nowrap">图元显示</div>
            <div className="ml-[4px] w-[75px] h-[28px] pt-[2px] bg-[#e5e7e7] rounded-t-[4px] text-[#777] text-[14.5px] flex items-center justify-center whitespace-nowrap">楼层显示</div>
          </div>
          <div className="ml-[2px] mt-[4px] h-[624px] border border-[#e4e6e7] flex flex-col overflow-hidden shrink-0 relative">
            <div className="grid grid-cols-[126px_79px_20px] h-[26px] border-b border-[#eceeef] text-[14.5px] shrink-0">
              <div className="flex items-center justify-center border-r border-[#e6e7e8]">图层构件</div>
              <div className="flex items-center justify-center border-r border-[#e6e7e8] whitespace-nowrap">显示图元</div>
              <div className="flex items-center pl-[3px] overflow-hidden whitespace-nowrap">显</div>
            </div>
            {rows.map((r, i) => <Tr key={i} r={r} idx={i} />)}
            <div className="mt-[13px] ml-[14px] w-[129px] h-[5px] bg-[#eceded] rounded-full" />
            <div className="absolute right-[9px] top-[16px] w-[4px] h-[110px] bg-[#f0f1f2] rounded-full" />
          </div>
          <div className="flex-1 flex justify-end items-start pr-[11px] pt-[9px]">
            <div className="w-[111px] h-[31px] border border-[#d6d8d9] rounded-[4px] text-[14.5px] flex items-center justify-center whitespace-nowrap">恢复默认设置</div>
          </div>
          <div className="absolute left-[190px] top-[475px] w-[50px] h-[50px] rounded-full bg-[#dde7f6] flex items-center justify-center">
            <svg width="20" height="32" viewBox="0 0 20 32"><rect x="5" y="0" width="10" height="8" fill="#c9ced6" /><path d="M2 8h16v17a8 7 0 0 1-16 0z" fill="#4f7fe8" /></svg>
          </div>
        </div>
      </div>

      {/* status */}
      <div className="h-[40px] bg-white border-b border-[#c9cbcc] flex items-center shrink-0 text-[14.5px] text-[#55585b]">
        <span className="w-[115px] pl-[3px] whitespace-nowrap">层高：<span className="ml-[9px]">3</span></span>
        <span className="w-[175px] whitespace-nowrap">标高：<span className="ml-[5px]">-0.05~2.95</span></span>
        <span className="w-[138px] whitespace-nowrap">选中图元：<span className="ml-[4px]">0</span></span>
        <span className="w-[137px] whitespace-nowrap">隐藏图元：<span className="ml-[4px]">0</span></span>
        <div className="flex items-center">
          <Sq w={31}><Sv s={18} c={G}><path d="M4 2v14h12M4 11h5v5" /></Sv></Sq>
          <span className="ml-[4px]" />
          <Sq w={44} active drop><Sv s={18} c={G}><rect x="3" y="3" width="13" height="13" rx="2" /><circle cx="3" cy="3" r="1.3" stroke={B} /></Sv></Sq>
          <span className="ml-[9px]" />
          <Sq w={30}><Sv s={20} c={G}><path d="M2 2l16 16M18 2L2 18" /></Sv></Sq>
          <span className="ml-[8px]" />
          <Sq w={44} drop><Sv s={18} c={G}><path d="M2 16h14M2 16L14 4M9 16c0-2-1-4-3-5" /></Sv></Sq>
          <span className="ml-[6px]" />
          <Sq w={44} drop><Sv s={18} c={G}><path d="M5 2v6M2 5h6" /><rect x="7" y="11" width="9" height="4" fill={G} /></Sv></Sq>
          <span className="ml-[4px]" />
          <Sq w={30}><Sv s={18} c={G}><rect x="2" y="2" width="11" height="12" fill="#bbb" /><rect x="5" y="4" width="9" height="10" fill="#555" /><path d="M13 15l4 1-2 2z" fill={G} /></Sv></Sq>
          <span className="ml-[5px]" />
          <Sq w={31}><Sv s={18} c={G}><path d="M3 17C3 9 7 4 15 3" /><path d="M13 12l4 3-4 2z" fill={G} /></Sv></Sq>
        </div>
        <span className="ml-[20px]"><Sv s={20} c={G}><path d="M2 18L18 2M11 2h7v7M2 11v7h7" /></Sv></span>
        <span className="ml-[5px] text-[15px] whitespace-nowrap">按鼠标左键指定第一个角点，或拾取构件图元</span>
        <span className="ml-auto w-[18px] h-[18px] rounded-full bg-[#6cb52a] flex items-center justify-center">
          <svg width="11" height="11" viewBox="0 0 12 12" fill="none" stroke="#fff" strokeWidth="1.6"><path d="M2 6l3 3 5-6" /></svg>
        </span>
        <span className="ml-[8px] mr-[14px] whitespace-nowrap">实时计算已完成</span>
      </div>

      {/* taskbar */}
      <div className="flex-1 bg-[#eef0f1] flex items-center text-[#2e3133]">
        <div className="w-[344px] flex items-center pl-[25px] shrink-0">
          <svg width="32" height="32" viewBox="0 0 32 32"><path d="M22 3a13 13 0 1 0 6 22 15 15 0 0 1-6-22z" fill="#efa63b" /><path d="M2 11a4 4 0 0 1 5-4 5 5 0 0 1 9 3H3z" fill="#b7cfe8" /><path d="M16 25a3 3 0 0 1 3-4 4 4 0 0 1 8 1 2 2 0 0 1 2 3z" fill="#cfe0f0" /></svg>
          <div className="ml-[8px] flex flex-col leading-[20px] text-[15px]">
            <span>27°C</span>
            <span className="text-[#55585b]">局部多云</span>
          </div>
        </div>
        <div className="grid grid-cols-2 gap-[2px] w-[29px] h-[29px] shrink-0">
          <span className="bg-[#42b8ec]" /><span className="bg-[#2ea4e6]" /><span className="bg-[#1b8edb]" /><span className="bg-[#0f78c9]" />
        </div>
        <div className="ml-[20px] w-[272px] h-[39px] rounded-full bg-[#f9fafa] flex items-center pl-[13px] relative shrink-0">
          <svg width="20" height="20" viewBox="0 0 20 20" fill="none" stroke="#222" strokeWidth="2"><circle cx="8.5" cy="8.5" r="6.5" /><path d="M13 13l6 6" /></svg>
          <span className="ml-[8px] text-[17px] text-[#55585b]">搜索</span>
          <svg className="absolute right-[8px] top-[1px]" width="54" height="38" viewBox="0 0 54 38">
            <path d="M6 20l6-7 4 9-4 4zM42 12l8 2-4 8z" fill="#c9561c" />
            <rect x="18" y="13" width="19" height="20" rx="3" fill="#eea822" />
            <path d="M37 18h5v9h-5" fill="none" stroke="#eea822" strokeWidth="2" />
            <ellipse cx="27" cy="34" rx="20" ry="2.5" fill="#9c9c90" />
            <path d="M22 10c0-3 6-3 5-7" stroke="#ccc" strokeWidth="2" fill="none" />
          </svg>
        </div>
        <Slot w={57}><svg width="30" height="30" viewBox="0 0 30 30"><rect x="5" y="10" width="16" height="18" fill="#2b2b2b" /><rect x="10" y="2" width="16" height="18" fill="#d9dbdb" /></svg></Slot>
        <Slot dot><svg width="30" height="32" viewBox="0 0 30 32"><path d="M1 4h11l3 4h14v22H1z" fill="#f7d35e" /><rect x="7" y="22" width="16" height="8" fill="#1f7ac2" /></svg></Slot>
        <Slot><svg width="26" height="34" viewBox="0 0 26 34"><ellipse cx="13" cy="20" rx="11" ry="13" fill="#111" /><ellipse cx="13" cy="23" rx="7" ry="9" fill="#fff" /><circle cx="13" cy="8" r="7.5" fill="#111" /><path d="M7 15h12l-2 5-4-2-4 2z" fill="#d8261c" /><path d="M10 11h6l-3 3z" fill="#f2b01c" /></svg></Slot>
        <Slot><svg width="32" height="34" viewBox="0 0 32 34"><path d="M2 17C2 7 10 1 17 1c8 0 14 6 14 14 0 4-4 6-8 6 3-2 3-6 0-8-4-3-11 0-11 6 0 6 6 11 14 11-3 2-7 3-9 3C9 33 2 26 2 17z" fill="#1b8ed8" /><path d="M2 17C2 7 10 1 17 1c-6 2-9 6-9 9-3 1-6 4-6 7z" fill="#35c1a4" /></svg></Slot>
        <Slot><svg width="30" height="34" viewBox="0 0 30 34"><rect x="1" y="8" width="28" height="25" rx="3" fill="#17507f" /><path d="M9 9c0-9 12-9 12 0" fill="none" stroke="#17507f" strokeWidth="2" /><rect x="10" y="14" width="5" height="5" fill="#e84e1c" /><rect x="16" y="14" width="5" height="5" fill="#7cbb1c" /><rect x="10" y="20" width="5" height="5" fill="#1ca4e8" /><rect x="16" y="20" width="5" height="5" fill="#f2b01c" /></svg></Slot>
        <Slot><svg width="28" height="34" viewBox="0 0 28 34" fill="none" strokeLinecap="round"><path d="M4 17C4 8 12 2 22 4" stroke="#1aa3e8" strokeWidth="5" /><path d="M3 16h22" stroke="#1aa3e8" strokeWidth="3" /><path d="M25 18c0 9-10 15-19 10" stroke="#1aa3e8" strokeWidth="5" /><path d="M8 22L24 10" stroke="#17c1e8" strokeWidth="3" /></svg></Slot>
        <Slot><svg width="30" height="34" viewBox="0 0 30 34"><rect width="30" height="34" rx="6" fill="#1e1e1e" /><path d="M5 8l6 4v14M25 8l-6 4v14M15 7l3 4-3 4-3-4zM15 15v13" stroke="#aaa" strokeWidth="2" fill="none" /></svg></Slot>
        <Slot><svg width="30" height="34" viewBox="0 0 30 34"><path d="M3 0h24l3 34H0z" fill="#25c77c" /><path d="M10 9c1 6 9 6 10 0" stroke="#fff" strokeWidth="2" fill="none" /></svg></Slot>
        <Slot><svg width="30" height="34" viewBox="0 0 30 34"><rect width="30" height="34" rx="5" fill="#3f86e8" /><path d="M6 7c5 1 8 4 9 8l8-8-4 14-4 8-2-6-7-3 5-1z" fill="#fff" /></svg></Slot>
        <Slot><svg width="28" height="36" viewBox="0 0 28 36" fill="none"><path d="M5 20a9 9 0 0 1 18-1H6a8 8 0 0 0 16 4" stroke="#7cc63c" strokeWidth="5" /><path d="M4 30C2 18 14 6 26 2" stroke="#4aa82a" strokeWidth="1.5" /></svg></Slot>
        <Slot dot><svg width="34" height="34" viewBox="0 0 34 34"><rect width="34" height="34" rx="7" fill="#15181c" /><rect x="8" y="11" width="13" height="13" rx="2" fill="none" stroke="#eee" strokeWidth="1.5" /><path d="M21 16l6-3v9l-6-3" fill="none" stroke="#eee" strokeWidth="1.5" /><circle cx="16" cy="15" r="1" fill="#f2c01c" /></svg></Slot>
        <Slot w={56} dot><div className="w-[29px] h-[38px] bg-gradient-to-b from-[#3b6a8f] to-[#1e5a94] rounded-[3px] border-x-[3px] border-[#5a6a75] flex items-center justify-center text-[12px] text-[#d8e6f2] font-['Liberation_Sans'] font-bold">CAD</div></Slot>
        <Slot w={57}>
          <div className="w-[47px] h-[47px] bg-[#f7f8f9] flex items-start justify-center pt-[9px] relative">
            <svg width="29" height="29" viewBox="0 0 29 29"><rect width="29" height="29" rx="6" fill="#2f6fe0" /><path d="M6 9l17-3-2 5-5 1-1 12-4-3v-8l-5 1z" fill="#fff" /></svg>
            <span className="absolute bottom-[2px] w-[20px] h-[4px] rounded-full bg-[#2277c0]" />
          </div>
        </Slot>
        <Slot w={51} dot><svg width="26" height="32" viewBox="0 0 26 32"><path d="M1 4l12-3 12 3c0 14-4 22-12 27C5 26 1 18 1 4z" fill="#2a6a8c" /><path d="M6 6l11 8-7 2 9 8-3-7-5-1 5-3z" fill="#cfe3ee" /></svg></Slot>
        <div className="ml-[16px] flex items-center h-full shrink-0">
          <Slot w={40}><Sv s={16} c="#222" w={2} vb={16}><path d="M2 11l6-6 6 6" /></Sv></Slot>
          <Slot w={39}><div className="w-[20px] h-[24px] rounded-[5px] bg-[#4ab8f5] flex items-center justify-center"><span className="w-[11px] h-[11px] rounded-full border border-white" /></div></Slot>
          <Slot w={41}><Sv s={24} c="#222" vb={24}><path d="M6 19a5 5 0 0 1 0-10 6 6 0 0 1 11-1 5 5 0 0 1 2 10z" fill="#bbb" /><path d="M3 3l18 18" strokeWidth="1.6" /></Sv></Slot>
          <Slot w={40}><Sv s={26} c="#2f76d2" vb={24}><rect x="8" y="1" width="8" height="15" rx="4" /><path d="M4 11a8 8 0 0 0 16 0M12 19v4" /></Sv></Slot>
          <Slot w={39}><span className="text-[19px] text-[#333]">英</span></Slot>
          <Slot w={58}><span className="text-[19px] text-[#333]">拼</span></Slot>
          <Slot w={24}><Sv s={22} c="#222" vb={22}><path d="M1 8c6-6 14-6 20 0M4 11c4-4 10-4 14 0M7 14c3-2 5-2 8 0" /><circle cx="11" cy="18" r="1.3" fill="#222" /></Sv></Slot>
          <Slot w={20}><Sv s={18} c="#333" vb={18}><path d="M2 7h3l4-4v12l-4-4H2zM12 6c1 2 1 4 0 6" /></Sv></Slot>
          <span className="w-[16px]" />
          <Slot w={28}><svg width="24" height="18" viewBox="0 0 24 18" fill="none" stroke="#222" strokeWidth="1.5"><rect x="1" y="4" width="19" height="12" rx="2" /><rect x="3" y="6" width="12" height="8" fill="#222" /><path d="M21 8h2v4h-2M8 0L5 4h3l-2 3" /></svg></Slot>
        </div>
        <div className="ml-auto pr-[24px] flex flex-col items-end leading-[20px] text-[15px] text-[#33363a]">
          <span>23:20</span>
          <span>2023-09-14</span>
        </div>
      </div>
    </div>
  );
}
